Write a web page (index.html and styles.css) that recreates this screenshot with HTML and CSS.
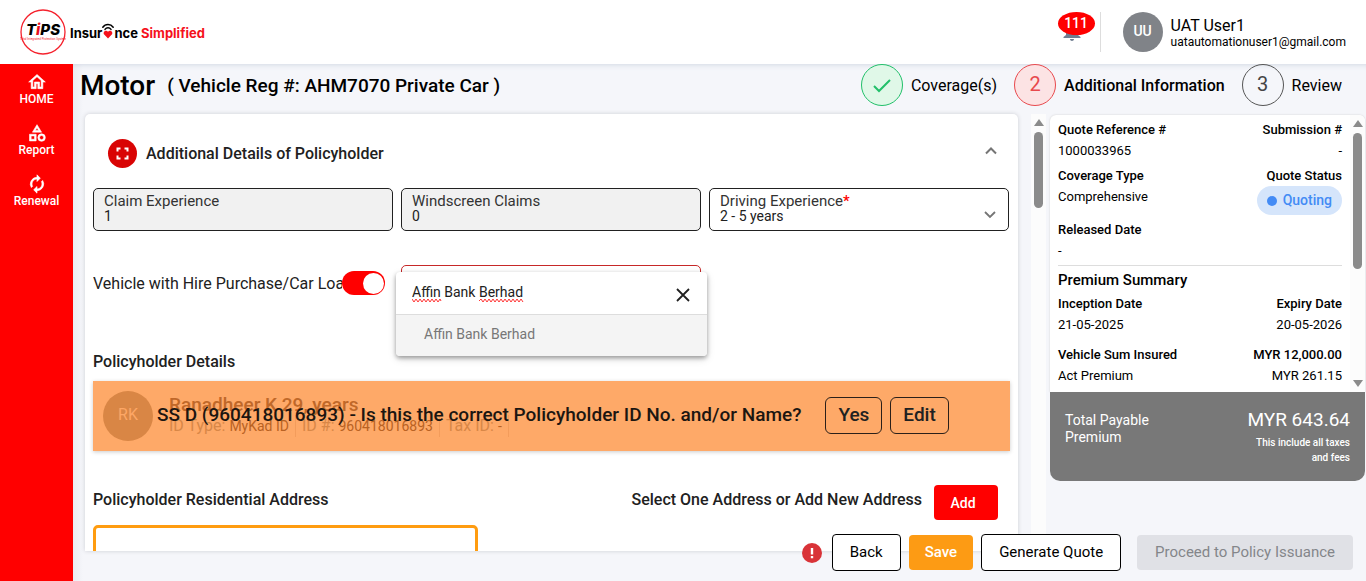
FILE: index.html
```html
<!DOCTYPE html>
<html lang="en">
<head>
<meta charset="utf-8">
<meta name="viewport" content="width=device-width, initial-scale=1">
<title>Motor Quote</title>
<link rel="stylesheet" href="styles.css">
</head>
<body>
<header class="topbar">
  <a class="brand" href="#">
    <svg class="brand-badge" width="46" height="46" viewBox="0 0 46 46" aria-hidden="true">
      <circle cx="23" cy="23" r="22" fill="#fff" stroke="#f5222d" stroke-width="1.3"/>
      <text class="brand-tips" x="23" y="26" text-anchor="middle">T<tspan fill="#e8101c">i</tspan>PS</text>
      <text class="brand-tiny" x="23" y="31" text-anchor="middle">Total Integrated Protection System</text>
    </svg>
    <span class="brand-text">Insur<svg width="12" height="17" viewBox="0 0 12 17" aria-hidden="true"><g fill="none" stroke="#000" stroke-width="1.5" stroke-linecap="round"><path d="M.8 4.200C3.400 .6 8.600 .6 11.200 4.200"/><path d="M3 6.400C4.600 4.300 7.400 4.300 9 6.400"/></g><path d="M6 15.500 2.200 11.500C.2 8.800 4.200 6 6 8.800c1.800-2.800 5.800 0 3.800 2.700z" fill="#f5121c"/></svg>nce <em>Simplified</em></span>
  </a>
  <div class="account">
    <button class="bell" type="button" aria-label="Notifications">
      <svg width="24" height="24" viewBox="0 0 24 24"><path fill="#6f7d90" d="M12 22c1.100 0 2-.9 2-2h-4c0 1.100.9 2 2 2zm6-6v-5c0-3.070-1.640-5.640-4.500-6.320V4a1.500 1.500 0 0 0-3 0v.68C7.630 5.360 6 7.920 6 11v5l-2.500 2v1h17v-1z"/></svg>
      <span class="bell-count">111</span>
    </button>
    <div class="profile">
      <span class="avatar">UU</span>
      <div class="who"><span class="who-name">UAT User1</span><span class="who-mail">uatautomationuser1@gmail.com</span></div>
    </div>
  </div>
</header>
<div class="shell">
  <nav class="sidebar">
    <a href="#"><svg width="20" height="20" viewBox="0 0 24 24"><path fill="#fff" stroke="#fff" stroke-width=".7" d="m12 5.700 5 4.500V18h-2v-6H9v6H7v-7.800l5-4.500M12 3 2 12h3v8h6v-6h2v6h6v-8h3z"/></svg>HOME</a>
    <a href="#"><svg width="20" height="20" viewBox="0 0 24 24"><path fill="#fff" stroke="#fff" stroke-width=".7" d="m12 2-5.500 9h11zm0 3.840L13.930 9h-3.870zM17.500 13a4.500 4.500 0 1 0 0 9 4.500 4.500 0 0 0 0-9zm0 7a2.500 2.500 0 1 1 0-5 2.500 2.500 0 0 1 0 5zM3 21.500h8v-8H3zm2-6h4v4H5z"/></svg>Report</a>
    <a href="#"><svg width="20" height="20" viewBox="0 0 24 24"><path fill="#fff" stroke="#fff" stroke-width=".8" d="M12 6v3l4-4-4-4v3a8 8 0 0 0-6.760 12.260L6.700 14.800A5.900 5.900 0 0 1 6 12c0-3.310 2.690-6 6-6zm6.760 1.740L17.300 9.200c.44.840.7 1.790.7 2.800 0 3.310-2.690 6-6 6v-3l-4 4 4 4v-3a8 8 0 0 0 6.760-12.260z"/></svg>Renewal</a>
  </nav>
  <main class="main">
    <div class="titlebar">
      <h1>Motor <small>( Vehicle Reg #: AHM7070 Private Car )</small></h1>
      <ol class="steps">
        <li class="done"><span class="dot"><svg width="24" height="24" viewBox="0 0 24 24"><path d="M4 13l5 5L20 7" fill="none" stroke="#22c06a" stroke-width="2"/></svg></span>Coverage(s)</li>
        <li class="current"><span class="dot">2</span>Additional Information</li>
        <li><span class="dot">3</span>Review</li>
      </ol>
    </div>
    <div class="workspace">
      <section class="card">
        <header class="card-head">
          <span class="card-icon"><svg width="15" height="15" viewBox="0 0 15 15"><path d="M2.500 5.500V2.500h3M9.500 2.500h3v3M12.500 9.500v3h-3M5.500 12.500h-3v-3" fill="none" stroke="#fff" stroke-width="2"/></svg></span>
          <h2>Additional Details of Policyholder</h2>
          <button class="collapse" type="button" aria-label="Collapse"><svg width="14" height="14" viewBox="0 0 14 14"><path d="M2 9.500l5-5 5 5" fill="none" stroke="#757575" stroke-width="2"/></svg></button>
        </header>
        <div class="fields">
          <div class="field off"><label for="claims">Claim Experience</label><input id="claims" value="1" readonly></div>
          <div class="field off"><label for="wind">Windscreen Claims</label><input id="wind" value="0" readonly></div>
          <div class="field"><label for="drive">Driving Experience<b>*</b></label>
            <select id="drive"><option>2 - 5 years</option></select>
            <svg class="caret" width="14" height="14" viewBox="0 0 14 14"><path d="M2 5l5 5 5-5" fill="none" stroke="#757575" stroke-width="1.800"/></svg>
          </div>
        </div>
        <div class="fields loan-row">
          <div class="loan">
            <label for="loan">Vehicle with Hire Purchase/Car Loan</label>
            <input id="loan" class="switch" type="checkbox" role="switch" checked>
          </div>
          <div class="bank">
            <div class="popup">
              <div class="search">
                <input type="text" value="Affin Bank Berhad" aria-label="Search bank" spellcheck="false">
                <svg class="squiggle" width="112" height="5" viewBox="0 0 112 5" aria-hidden="true"><path d="M0 1l2 3 2-3 2 3 2-3 2 3 2-3 2 3 2-3 2 3 2-3 2 3 2-3 2 3 2-3 1 2M67 3l2-2 2 3 2-3 2 3 2-3 2 3 2-3 2 3 2-3 2 3 2-3 2 3 2-3 2 3 2-3 2 3 2-3 2 3 2-3 2 3 2-3 2 3" fill="none" stroke="#f33" stroke-width="1"/></svg>
                <button type="button" aria-label="Clear"><svg width="16" height="16" viewBox="0 0 16 16"><path d="M2 2l12 12M14 2L2 14" stroke="#212121" stroke-width="1.800"/></svg></button>
              </div>
              <button class="option" type="button">Affin Bank Berhad</button>
            </div>
          </div>
        </div>
        <h3 class="sub">Policyholder Details</h3>
        <div class="holder">
          <span class="holder-avatar">RK</span>
          <div class="holder-info">
            <strong>Ranadheer K 29, years</strong>
            <p><span>ID Type: <i>MyKad ID</i></span><span>ID #: <i>960418016893</i></span><span>Tax ID: <i>-</i></span></p>
          </div>
          <div class="confirm">
            <span>SS D (960418016893) - Is this the correct Policyholder ID No. and/or Name?</span>
            <button type="button">Yes</button><button type="button">Edit</button>
          </div>
        </div>
        <div class="address-head">
          <h3>Policyholder Residential Address</h3>
          <span>Select One Address or Add New Address</span>
          <button class="add" type="button">Add</button>
        </div>
        <div class="address-box"></div>
      </section>
      <div class="scroll page-scroll" aria-hidden="true"><i class="up"></i><i class="thumb"></i></div>
      <aside class="summary">
        <div class="summary-top">
          <div class="summary-body">
            <dl>
              <div><dt>Quote Reference #</dt><dd>1000033965</dd></div>
              <div><dt>Submission #</dt><dd>-</dd></div>
              <div><dt>Coverage Type</dt><dd>Comprehensive</dd></div>
              <div><dt>Quote Status</dt><dd class="status">Quoting</dd></div>
              <div><dt>Released Date</dt><dd>-</dd></div>
            </dl>
            <h3>Premium Summary</h3>
            <dl>
              <div><dt>Inception Date</dt><dd>21-05-2025</dd></div>
              <div><dt>Expiry Date</dt><dd>20-05-2026</dd></div>
            </dl>
            <table>
              <tr><th>Vehicle Sum Insured</th><th>MYR 12,000.00</th></tr>
              <tr><td>Act Premium</td><td>MYR 261.15</td></tr>
            </table>
          </div>
          <div class="scroll side-scroll" aria-hidden="true"><i class="up"></i><i class="thumb"></i><i class="down"></i></div>
        </div>
        <div class="total">
          <span class="total-label">Total Payable Premium</span>
          <div class="total-sum"><strong>MYR 643.64</strong><small>This include all taxes and fees</small></div>
        </div>
      </aside>
    </div>
    <footer class="actions">
      <svg width="20" height="20" viewBox="0 0 20 20" aria-label="Errors"><circle cx="10" cy="10" r="10" fill="#d93338"/><path d="M8.800 5h2.400v6.500H8.800zM8.800 13h2.400v2.300H8.800z" fill="#fff"/></svg>
      <button class="btn outline" type="button">Back</button>
      <button class="btn save" type="button">Save</button>
      <button class="btn outline" type="button">Generate Quote</button>
      <button class="btn proceed" type="button" disabled>Proceed to Policy Issuance</button>
    </footer>
  </main>
</div>
</body>
</html>
```
FILE: styles.css
```css
* { box-sizing: border-box; }
body { margin: 0; height: 100vh; display: flex; flex-direction: column; overflow: hidden; background: #f5f6fa; color: #212121; font: 14px/20px Roboto, "Liberation Sans", sans-serif; }
h1, h2, h3, p, dl, dd, ol { margin: 0; padding: 0; }
button, input, select { font: inherit; color: inherit; }
button { padding: 0; border: 0; background: none; cursor: pointer; }
svg { display: block; flex: none; }

.topbar { flex: none; height: 64px; display: flex; justify-content: space-between; align-items: center; padding: 0 20px; background: #fff; box-shadow: 0 0 8px #c8d0de; position: relative; }
.brand { display: flex; align-items: center; gap: 4px; color: #000; text-decoration: none; }
.brand-tips { font: italic 800 15px Inter, sans-serif; }
.brand-tiny { font: 3px Roboto, sans-serif; fill: #f5222d; }
.brand-text { display: flex; align-items: baseline; white-space: pre; padding-top: 2px; font: 700 13px/20px Inter, sans-serif; }
.brand-text svg { align-self: flex-start; }
.brand-text em { font-style: normal; color: #f5121c; }
.account { display: flex; align-items: center; color: #000; }
.bell { position: relative; width: 40px; height: 40px; display: grid; justify-content: center; align-items: start; padding: 7px 0 0; margin-right: 8px; }
.bell-count { position: absolute; top: 0; left: 6px; width: 37px; height: 23px; border-radius: 50%; background: #f00; color: #fff; font: 500 14px/23px Roboto, sans-serif; text-align: center; }
.profile { display: flex; align-items: center; gap: 8px; padding-left: 22px; border-left: 1px solid #ddd; }
.avatar { width: 40px; height: 40px; border-radius: 50%; background: #808388; color: #fff; font-size: 14px; font-weight: 500; line-height: 38px; text-align: center; }
.who { display: flex; flex-direction: column; padding-top: 2px; }
.who-name { font-size: 16px; line-height: 18px; }
.who-mail { font-size: 12px; line-height: 15px; }

.shell { flex: 1; min-height: 0; display: flex; }
.sidebar { position: relative; flex: none; width: 73px; background: #f00; display: flex; flex-direction: column; gap: 17px; padding-top: 8px; }
.sidebar a { display: flex; flex-direction: column; align-items: center; color: #fff; text-decoration: none; font-size: 12px; line-height: 14px; font-weight: 500; }
.main { flex: 1; min-width: 0; display: flex; flex-direction: column; position: relative; padding-bottom: 30px; background: linear-gradient(90deg, #ebedf2, #f5f6fa 10px); box-shadow: inset 0 6px 6px -6px #c8d0de; }
.titlebar { display: flex; justify-content: space-between; height: 50px; padding: 0 24px 0 7px; color: #000; }
.titlebar h1 { display: flex; align-items: center; gap: 12px; height: 44px; font-size: 28px; font-weight: 500; white-space: nowrap; }
.titlebar small { font-size: 19px; }
.steps { display: flex; gap: 17px; list-style: none; font-size: 16px; line-height: 44px; white-space: nowrap; }
.steps li { display: flex; gap: 8px; }
.dot { width: 42px; height: 42px; border: 1px solid #555; border-radius: 50%; font-size: 20px; line-height: 38px; color: #444; display: flex; justify-content: center; font-weight: 400; }
.done .dot { background: #e0f8e8; border-color: #22c06a; align-items: center; }
.current { font-weight: 500; }
.current .dot { background: #fce3e4; border-color: #e8494d; color: #e8494d; }

.workspace { flex: 1; min-height: 0; display: flex; padding: 0 1px 0 12px; align-items: stretch; }
.card { flex: 1; min-width: 0; overflow: hidden; background: #fff; border-radius: 5px 5px 0 0; box-shadow: 0 0 4px #ccced4; padding: 25px 8px 0; }
.card-head { display: flex; align-items: center; gap: 9px; padding: 0 12px 0 15px; }
.card-head h2 { flex: 1; font-size: 16px; line-height: 20px; font-weight: 500; }
.card-icon { width: 29px; height: 29px; border-radius: 50%; background: #d90404; display: grid; place-items: center; }
.collapse { padding-bottom: 6px; }
.fields { display: grid; grid-template-columns: repeat(3, minmax(0, 1fr)); gap: 8px; margin-top: 20px; padding-right: 1px; }
.field { position: relative; height: 43px; border: 1px solid #212121; border-radius: 5px; padding: 5px 10px; display: flex; flex-direction: column; }
.off { background: #f1f1f1; }
.field label { font-size: 15px; line-height: 15px; color: #333; }
.field label b { color: #f00; font-weight: 500; }
.field input, .field select { width: 100%; height: 15px; padding: 0; border: 0; outline: 0; background: none; appearance: none; line-height: 15px; }
.caret { position: absolute; right: 11px; bottom: 9px; pointer-events: none; }
.loan-row { margin-top: 34px; height: 43px; }
.loan { display: flex; height: 36px; align-items: center; padding-right: 8px; font-size: 16px; }
.loan label { flex: 1; min-width: 0; overflow: hidden; white-space: nowrap; padding-top: 1px; }
.switch { appearance: none; flex: none; width: 43px; height: 24px; margin: 0; border-radius: 12px; background: #f00; display: flex; justify-content: flex-end; align-items: center; padding-right: 1px; }
.switch::before { content: ""; width: 21px; height: 21px; border-radius: 50%; background: #fff; }
.bank { position: relative; border: 1px solid #c62828; border-radius: 5px; }
.popup { position: absolute; z-index: 2; top: 6px; left: -6px; right: -7px; background: #fff; border-radius: 4px; box-shadow: 0 2px 4px #0005, 0 3px 8px #0002; overflow: hidden; }
.search { position: relative; display: flex; align-items: center; height: 43px; padding: 0 16px; border-bottom: 1px solid #ddd; }
.search input { flex: 1; min-width: 0; padding: 0 0 2px; border: 0; outline: 0; background: none; }
.search button { padding-top: 4px; }
.squiggle { position: absolute; left: 16px; top: 26px; }
.option { display: block; width: 100%; padding: 9px 28px 12px; background: #f4f4f4; color: #777; text-align: left; }
.sub, .address-head { font-size: 16px; line-height: 20px; font-weight: 500; }
.sub { margin-top: 44px; }
.holder { position: relative; display: flex; align-items: center; gap: 16px; height: 70px; margin-top: 9px; padding-left: 10px; background: #fea968; box-shadow: 0 1px 4px #ccc; }
.holder-avatar { width: 50px; height: 50px; border-radius: 50%; background: #d98645; color: #fda766; font-size: 16px; line-height: 48px; text-align: center; }
.holder-info { color: #d88747; }
.holder-info strong { display: block; font-size: 19px; line-height: 20px; font-weight: 500; color: #c06829; }
.holder-info p { display: flex; gap: 6px; font-size: 16px; line-height: 22px; }
.holder-info span { padding-right: 6px; border-right: 1px solid #f39c5b; }
.holder-info i { font-size: 14px; font-style: normal; color: #b96223; }
.confirm { position: absolute; inset: 0; display: flex; align-items: center; gap: 8px; padding: 0 0 2px 64px; color: #1c1611; font-size: 19px; font-weight: 500; white-space: nowrap; }
.confirm span { margin-right: 16px; }
.confirm button { height: 37px; padding: 0 12px; font-weight: 500; border: 1px solid #2b2019; border-radius: 6px; color: #212121; }
.address-head { display: flex; align-items: center; gap: 12px; margin-top: 34px; padding-right: 12px; }
.address-head h3 { flex: 1; font-size: 16px; font-weight: 500; }
.address-head h3, .address-head > span { padding-bottom: 6px; }
.add { width: 64px; height: 35px; padding-right: 6px; border-radius: 4px; background: #f00; color: #fff; font-size: 14px; font-weight: 500; }
.address-box { width: 42%; height: 120px; margin-top: 5px; border: 3px solid #ff9c10; border-radius: 5px; }

.scroll { flex: none; width: 15px; background: #fcfcfc; display: flex; flex-direction: column; align-items: center; gap: 6px; }
.scroll .up, .scroll .down { border: 5px solid transparent; border-top: 0; border-bottom: 7px solid #8b8b8b; }
.scroll .down { border-bottom: 0; border-top: 7px solid #8b8b8b; }
.thumb { width: 9px; border-radius: 5px; background: #8b8b8b; height: 76px; }
.page-scroll { margin: 0 4px 0 13px; padding-top: 5px; }
.side-scroll { padding: 5px 0; }
.side-scroll .thumb { height: 51%; }
.side-scroll .down { margin-top: auto; }

.summary { flex: none; width: 315px; display: flex; flex-direction: column; color: #000; font-size: 13px; padding-top: 1px; align-self: flex-start; }
.summary-top { display: flex; background: #fff; border-radius: 6px 6px 0 0; box-shadow: 0 0 2px #ccc; overflow: hidden; }
.summary-body { flex: 1; padding: 4px 8px 6px 8px; }
.summary dl { display: grid; grid-template-columns: 1fr 1fr; row-gap: 4px; }
.summary dl > div:nth-child(even) { text-align: right; }
.summary dt { font-weight: 500; line-height: 21px; }
.summary dd { line-height: 21px; }
.summary .status { display: inline-flex; align-items: center; gap: 6px; height: 29px; padding: 0 10px; border-radius: 15px; background: #d5e5fb; color: #438bf5; font-size: 14px; font-weight: 500; }
.status::before { content: ""; width: 10px; height: 10px; border-radius: 50%; background: #438bf5; }
.summary h3 { margin: 4px 0 2px; padding-top: 3px; border-top: 1px solid #ddd; font-size: 15px; line-height: 22px; font-weight: 500; }
.summary table { width: 100%; margin-top: 9px; border-collapse: collapse; line-height: 21px; }
.summary th, .summary td { padding: 0; text-align: left; font-weight: 400; }
.summary th { font-weight: 500; }
.summary tr > :last-child { text-align: right; }
.total { display: flex; justify-content: space-between; min-height: 89px; padding: 16px 15px; background: #787878; color: #fff; border-radius: 0 0 10px 10px; }
.total-label { width: 100px; padding-top: 4px; font-size: 14px; line-height: 17px; }
.total-sum { width: 110px; text-align: right; }
.total-sum strong { display: block; font-size: 19px; line-height: 24px; font-weight: 400; white-space: nowrap; }
.total-sum small { display: block; font-size: 10px; line-height: 15px; font-weight: 500; padding-top: 3px; }

.actions { position: absolute; right: 13px; bottom: 10px; display: flex; align-items: center; gap: 8px; }
.actions > svg { margin-right: 2px; }
.btn { height: 35px; padding: 0 16px 1px; border-radius: 4px; font-size: 15px; white-space: nowrap; }
.outline { height: 37px; padding: 0 17px 2px; background: #fff; border: 1px solid #000; color: #000; }
.save { background: #fd9b14; color: #fff; font-weight: 500; padding: 0 16px 1px; }
.proceed { margin-left: 8px; padding: 0 18px 1px; background: #e0e1e6; color: #84868a; }
```
